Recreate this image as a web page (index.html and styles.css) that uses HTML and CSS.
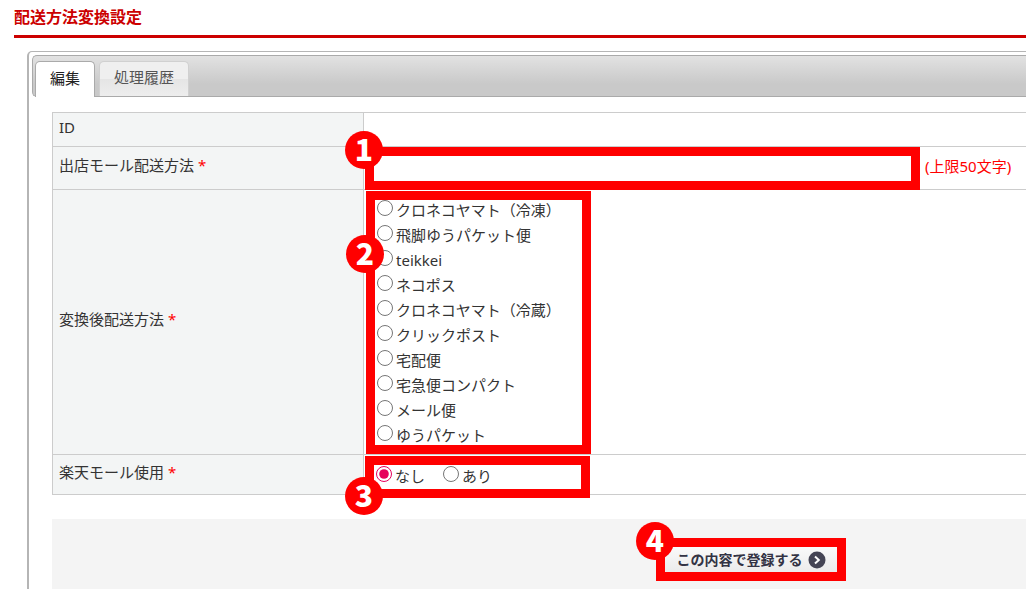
FILE: index.html
```
<!DOCTYPE html>
<html lang="ja">
  <head>
    <meta charset="UTF-8" />
    <meta name="viewport" content="width=device-width, initial-scale=1.0" />
    <title>配送方法変換設定</title>
    <link rel="stylesheet" href="styles.css">
  </head>
  <body>
    <h1 class="title">配送方法変換設定</h1>
    <div class="panel">
      <div class="tabs" role="tablist">
        <button type="button" class="tab active" role="tab" aria-selected="true">編集</button>
        <button type="button" class="tab" role="tab" aria-selected="false">処理履歴</button>
      </div>
      <form class="form">
        <table class="settings">
          <tr class="row-id">
            <th scope="row">ID</th>
            <td></td>
          </tr>
          <tr class="row-mall">
            <th scope="row"><label for="mallMethod">出店モール配送方法 <span class="required">*</span></label></th>
            <td>
              <div class="field">
                <div class="marked marked-input">
                  <span class="badge">1</span>
                  <input type="text" id="mallMethod" class="text" maxlength="50" />
                </div>
                <span class="note">(上限50文字)</span>
              </div>
            </td>
          </tr>
          <tr class="row-method">
            <th scope="row">変換後配送方法 <span class="required">*</span></th>
            <td>
              <div class="marked marked-list">
                <span class="badge badge-list">2</span>
                <label class="option"><input type="radio" name="method" />クロネコヤマト（冷凍）</label>
                <label class="option"><input type="radio" name="method" />飛脚ゆうパケット便</label>
                <label class="option"><input type="radio" name="method" />teikkei</label>
                <label class="option"><input type="radio" name="method" />ネコポス</label>
                <label class="option"><input type="radio" name="method" />クロネコヤマト（冷蔵）</label>
                <label class="option"><input type="radio" name="method" />クリックポスト</label>
                <label class="option"><input type="radio" name="method" />宅配便</label>
                <label class="option"><input type="radio" name="method" />宅急便コンパクト</label>
                <label class="option"><input type="radio" name="method" />メール便</label>
                <label class="option"><input type="radio" name="method" />ゆうパケット</label>
              </div>
            </td>
          </tr>
          <tr class="row-rakuten">
            <th scope="row">楽天モール使用 <span class="required">*</span></th>
            <td>
              <div class="marked marked-rakuten">
                <span class="badge badge-rakuten">3</span>
                <label class="option"><input type="radio" name="rakuten" checked />なし</label>
                <label class="option"><input type="radio" name="rakuten" />あり</label>
              </div>
            </td>
          </tr>
        </table>
        <div class="actions">
          <div class="marked marked-submit">
            <span class="badge">4</span>
            <button type="submit" class="submit">
              この内容で登録する
              <svg width="18" height="18" viewBox="0 0 18 18" aria-hidden="true">
                <circle cx="9" cy="9" r="8.5" fill="#454555" />
                <path d="M7 5.5 L10.8 9 L7 12.5" fill="none" stroke="#fff" stroke-width="2" />
              </svg>
            </button>
          </div>
        </div>
      </form>
    </div>
  </body>
</html>
```
FILE: styles.css
```
* {
  box-sizing: border-box;
}
body {
  margin: 0;
  min-height: 100vh;
  display: flex;
  flex-direction: column;
  padding-left: 14px;
  background-color: #fff;
  color: #333;
  font-family: "Noto Sans", "Noto Sans CJK JP", sans-serif;
  font-size: 15px;
  line-height: 24px;
}
button,
input {
  font: inherit;
  color: inherit;
}
.title {
  margin: 0;
  padding: 5px 0 6px;
  border-bottom: 3px solid #c00;
  color: #c00;
  font-size: 16px;
  font-weight: bold;
}
.panel {
  flex: 1;
  display: flex;
  flex-direction: column;
  margin: 13px 0 0 13px;
  padding: 3px 0 0 3px;
  border: 1px solid #b5b5b5;
  border-width: 1px 0 0 2px;
  border-radius: 5px 0 0 0;
}
.tabs {
  display: flex;
  gap: 4px;
  height: 42px;
  padding: 5px 0 0 2px;
  border: 1px solid #aaa;
  border-right: 0;
  border-radius: 5px 0 0 5px;
  background: linear-gradient(#e2e2e2, #c9c9c9 70%);
}
.tab {
  height: 35px;
  padding: 0 14px 4px;
  border: 1px solid #d0d0d0;
  border-bottom: 0;
  border-radius: 5px 5px 0 0;
  background: linear-gradient(#efefef 50%, #e5e5e5 50%, #ededed);
  color: #555;
}
.tab.active {
  height: 36px;
  border-color: #aaa;
  background: #fff;
  color: #222;
}
.form {
  flex: 1;
  display: flex;
  flex-direction: column;
  padding: 15px 0 0 20px;
}
.settings {
  width: 100%;
  border-collapse: collapse;
}
.settings th,
.settings td {
  padding: 0;
  border: 1px solid #ccc;
  border-right: 0;
  text-align: left;
  vertical-align: middle;
}
.settings th {
  width: 311px;
  padding: 0 6px 6px;
  background-color: #f3f5f5;
  font-weight: normal;
}
.row-id {
  height: 34px;
}
.row-mall {
  height: 43px;
}
.row-method {
  height: 265px;
}
.row-rakuten {
  height: 40px;
}
.required,
.note {
  color: #f00;
}
.note {
  padding-bottom: 4px;
}
.field {
  display: flex;
  align-items: center;
  gap: 5px;
  margin: -1px 0 -1px 1px;
}
/* red frame with a step number on its corner */
.marked {
  position: relative;
  border: 9px solid #f00;
}
.badge {
  position: absolute;
  z-index: 1;
  top: -25px;
  left: -29px;
  width: 38px;
  height: 38px;
  border-radius: 50%;
  background-color: #f00;
  color: #fff;
  font-family: "Noto Sans CJK JP", sans-serif;
  font-size: 30px;
  font-weight: 900;
  line-height: 34px;
  text-align: center;
}
.badge-list {
  top: 35px;
}
.badge-rakuten {
  top: 12px;
}
.marked-input {
  width: 555px;
  height: 43px;
}
.text {
  display: block;
  width: 100%;
  height: 25px;
  padding: 0 4px;
  border: 0;
  outline: 0;
  background-color: #fff;
}
.marked-list {
  display: grid;
  align-content: center;
  width: 225px;
  height: 263px;
  margin-left: 2px;
}
.option {
  display: flex;
  align-items: center;
  gap: 3px;
  height: 25px;
  padding-left: 2px;
}
.option input {
  width: 16px;
  height: 16px;
  margin: 0 0 3px;
  accent-color: #e6005c;
}
.marked-rakuten {
  display: flex;
  align-items: center;
  gap: 16px;
  width: 225px;
  height: 42px;
  margin: 0 0 -5px 1px;
}
.marked-rakuten .option {
  height: 24px;
  padding: 0 0 3px 2px;
}
.actions {
  flex: 1;
  margin-top: 24px;
  padding: 19px 0 8px 604px;
  background-color: #f4f4f4;
}
.marked-submit {
  width: 190px;
  height: 43px;
}
.submit {
  display: flex;
  align-items: center;
  justify-content: center;
  gap: 5px;
  width: 100%;
  height: 25px;
  padding: 0;
  border: 0;
  background: linear-gradient(#fafafa, #ebebeb);
  color: #334;
  font-size: 14px;
  font-weight: 600;
  white-space: nowrap;
}
```
